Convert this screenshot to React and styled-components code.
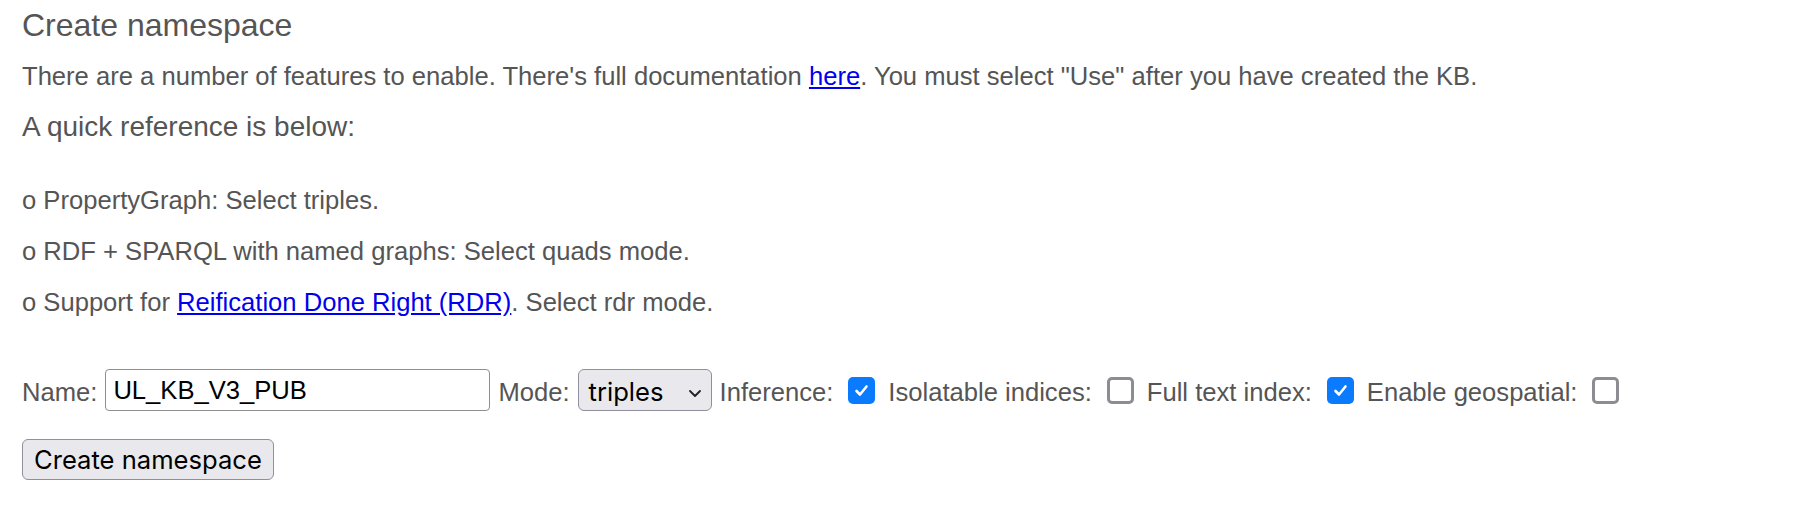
import React from 'react'
import styled, { createGlobalStyle } from 'styled-components'

const GlobalStyle = createGlobalStyle`
    body {
        margin: 0;
        background: #fff;
        font-family: "Liberation Sans", Arial, Helvetica, sans-serif;
        color: #555;
    }
`

const features = [
    { label: 'Inference:', checked: true },
    { label: 'Isolatable indices:', checked: false },
    { label: 'Full text index:', checked: true },
    { label: 'Enable geospatial:', checked: false },
]

const Checkbox = ({ checked }) => (
    <Box $checked={checked} role="checkbox" aria-checked={checked}>
        {checked && (
            <svg width="17" height="17" viewBox="0 0 17 17">
                <polyline points="3.5,9 7,12.5 13.5,4.5" fill="none" stroke="#fff" strokeWidth="2.6" strokeLinecap="round" strokeLinejoin="round" />
            </svg>
        )}
    </Box>
)

class App extends React.Component {
    render() {
        return (
            <Page>
                <GlobalStyle />
                <Title>Create namespace</Title>
                <Intro>
                    There are a number of features to enable. There's full documentation <Link href="#">here</Link>. You must select "Use" after you have created the KB.
                </Intro>
                <SubTitle>A quick reference is below:</SubTitle>
                <RefList>
                    <RefItem>o PropertyGraph: Select triples.</RefItem>
                    <RefItem>o RDF + SPARQL with named graphs: Select quads mode.</RefItem>
                    <RefItem>o Support for <Link href="#">Reification Done Right (RDR)</Link>. Select rdr mode.</RefItem>
                </RefList>
                <FormRow>
                    <Label>Name:</Label>
                    <NameInput type="text" defaultValue="UL_KB_V3_PUB" />
                    <Label>Mode:</Label>
                    <SelectBox>
                        <span>triples</span>
                        <Chevron width="12" height="7" viewBox="0 0 12 7">
                            <polyline points="1,1 6,6 11,1" fill="none" stroke="#222" strokeWidth="1.8" strokeLinecap="round" strokeLinejoin="round" />
                        </Chevron>
                    </SelectBox>
                    {features.map(f => (
                        <React.Fragment key={f.label}>
                            <Label>{f.label}</Label>
                            <Checkbox checked={f.checked} />
                        </React.Fragment>
                    ))}
                </FormRow>
                <CreateButton>Create namespace</CreateButton>
            </Page>
        )
    }
}

export default App
//-------------STYLES-------------------------------------------

const Page = styled.div`
    display: flex;
    flex-direction: column;
    align-items: flex-start;
    padding: 5px 0 0 22px;
`

const Title = styled.h2`
    margin: 0;
    font-size: 32px;
    line-height: 40px;
    font-weight: normal;
`

const Intro = styled.p`
    margin: 16px 0 0;
    font-size: 25.6px;
    line-height: 30px;
`

const Link = styled.a`
    color: #0000ee;
    text-decoration: underline;
`

const SubTitle = styled.h4`
    margin: 19px 0 0;
    font-size: 28px;
    line-height: 34px;
    font-weight: normal;
`

const RefList = styled.div`
    display: flex;
    flex-direction: column;
    gap: 21px;
    margin-top: 41px;
`

const RefItem = styled.div`
    font-size: 25.6px;
    line-height: 30px;
`

const FormRow = styled.div`
    display: flex;
    align-items: center;
    gap: 8px;
    height: 42px;
    margin-top: 52px;
`

const Label = styled.span`
    font-size: 25.6px;
    line-height: 30px;
    padding-top: 3px;
    white-space: nowrap;
`

const NameInput = styled.input`
    box-sizing: border-box;
    width: 385px;
    height: 42px;
    margin: 0;
    padding: 0 7px;
    border: 1px solid #8f8f8f;
    border-radius: 4px;
    font-family: inherit;
    font-size: 25.6px;
    color: #000;
    outline: none;
`

const SelectBox = styled.div`
    box-sizing: border-box;
    display: flex;
    align-items: center;
    justify-content: space-between;
    width: 134px;
    height: 42px;
    padding: 2px 10px 0 10px;
    border: 1px solid #8f8f9d;
    border-radius: 6px;
    background: #e9e9ed;
    font-family: Inter, "Liberation Sans", sans-serif;
    font-size: 25.6px;
    color: #000;
`

const Chevron = styled.svg`
    margin-top: 4px;
`

const Box = styled.span`
    box-sizing: border-box;
    display: flex;
    align-items: center;
    justify-content: center;
    width: 27px;
    height: 27px;
    margin: 0 5px 0 7px;
    border-radius: 5px;
    border: ${p => p.$checked ? 'none' : '3px solid #8c8c92'};
    background: ${p => p.$checked ? '#0a7aff' : '#fff'};
`

const CreateButton = styled.button`
    box-sizing: border-box;
    height: 41px;
    margin-top: 28px;
    padding: 0 11px;
    border: 1px solid #8f8f9d;
    border-radius: 6px;
    background: #e9e9ed;
    font-family: Inter, "Liberation Sans", sans-serif;
    font-size: 25.6px;
    color: #000;
`
